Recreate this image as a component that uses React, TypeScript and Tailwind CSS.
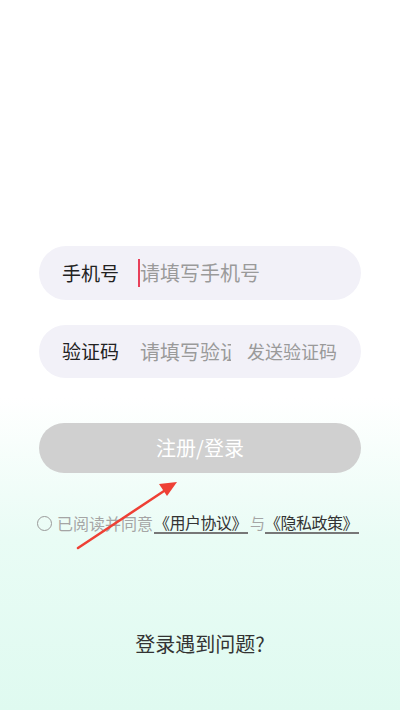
import React from "react";

const font = { fontFamily: '"Noto Sans CJK SC", "Noto Sans", sans-serif' };

export default function App() {
  return (
    <div
      className="relative w-[400px] h-[710px] overflow-hidden bg-[linear-gradient(180deg,#ffffff_0%,#ffffff_56%,#e9fcf5_76%,#dffaf0_100%)]"
      style={font}
    >
      <div className="flex flex-col pt-[246px]">
        <div className="mx-[39px] h-[54px] rounded-full bg-[#f2f1f8] flex items-center pl-[23px]">
          <span className="text-[19px] text-[#222] w-[76px]">手机号</span>
          <span className="w-[2px] h-[28px] bg-[#e8405a]"></span>
          <span className="text-[20px] text-[#9a9a9a]">请填写手机号</span>
        </div>
        <div className="mx-[39px] mt-[25px] h-[53px] rounded-full bg-[#f2f1f8] flex items-center pl-[23px]">
          <span className="text-[19px] text-[#222] w-[78px]">验证码</span>
          <span className="w-[91px] overflow-hidden whitespace-nowrap text-[20px] text-[#9a9a9a]">请填写验证码</span>
          <span className="ml-[16px] text-[18px] text-[#9a9a9a]">发送验证码</span>
        </div>
        <div className="mx-[39px] mt-[45px] h-[50px] rounded-full bg-[#d0d0d0] flex items-center justify-center">
          <span className="text-[20px] text-white">注册/登录</span>
        </div>
        <div className="mt-[40px] ml-[37px] flex items-center h-[20px] whitespace-nowrap">
          <span className="w-[15px] h-[15px] rounded-full border-[1.5px] border-[#9a9a9a]"></span>
          <span className="ml-[5px] text-[16px] text-[#a5a5a5]">已阅读并同意</span>
          <span className="ml-[1px] pr-[1px] text-[16px] text-[#333] border-b-2 border-[#777] leading-[20px] tracking-[-0.5px]">《用户协议》</span>
          <span className="ml-[2px] text-[15px] text-[#a5a5a5]">与</span>
          <span className="ml-[0px] pr-[1px] text-[16px] text-[#333] border-b-2 border-[#777] leading-[20px] tracking-[-0.5px]">《隐私政策》</span>
        </div>
        <div className="mt-[96px] flex justify-center">
          <span className="text-[20px] text-[#333]">登录遇到问题?</span>
        </div>
      </div>
      <svg className="absolute left-0 top-0" width="400" height="710" viewBox="0 0 400 710">
        <line x1="78" y1="548" x2="164" y2="491" stroke="#ee4035" strokeWidth="2.5" strokeLinecap="round" />
        <polygon points="177,482 159,484 167,496" fill="#ee4035" />
      </svg>
    </div>
  );
}
